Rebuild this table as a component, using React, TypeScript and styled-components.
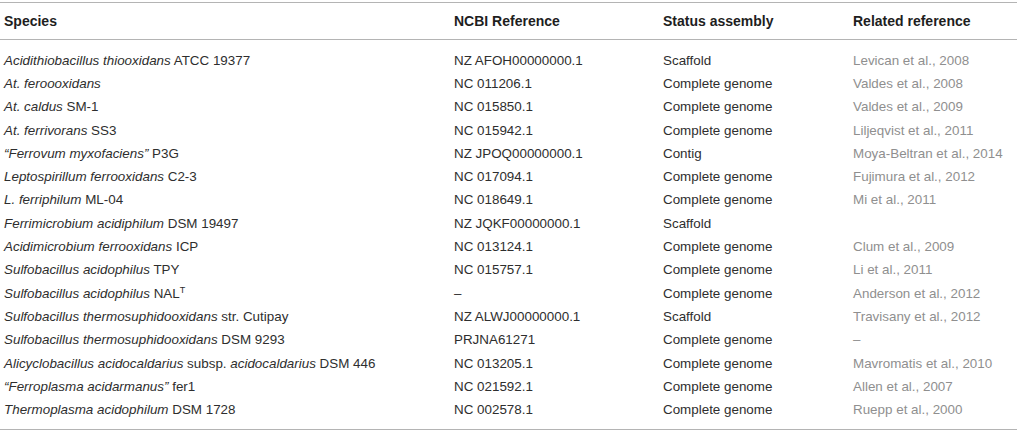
import React from "react";
import styled, { createGlobalStyle } from "styled-components";

const Global = createGlobalStyle`
  html, body { margin: 0; padding: 0; background: #ffffff; }
  body { font-family: "Liberation Sans", Arial, Helvetica, sans-serif; }
`;

const Wrapper = styled.div`
  width: 1017px;
  padding-top: 2px;
`;

const Table = styled.table`
  width: 1017px;
  border-collapse: collapse;
  table-layout: fixed;
  border-bottom: 1px solid #b4b4b4;
`;

const Col = styled.col<{ $w: number }>`
  width: ${(p) => p.$w}px;
`;

const HeadRow = styled.tr`
  border-top: 1px solid #b4b4b4;
  border-bottom: 1px solid #b4b4b4;
`;

const Th = styled.th`
  height: 36px;
  padding: 0 0 0 4px;
  text-align: left;
  vertical-align: middle;
  font-size: 14px;
  font-weight: bold;
  color: #1e1e1e;
`;

const Row = styled.tr`
  height: 23.3px;
`;

const Td = styled.td<{ $muted?: boolean }>`
  padding: 0 0 0 4px;
  height: 23.3px;
  vertical-align: middle;
  font-size: 13.4px;
  color: ${(p) => (p.$muted ? "#8f8f8f" : "#2e2e2e")};
  white-space: nowrap;
`;

const Spacer = styled.tr<{ $h: number }>`
  height: ${(p) => p.$h}px;
`;

const Sup = styled.sup`
  font-size: 9px;
  line-height: 0;
  vertical-align: 5px;
`;

type RowData = {
  species: React.ReactNode;
  ncbi: string;
  status: string;
  ref: string;
};

const rows: RowData[] = [
  { species: <><i>Acidithiobacillus thiooxidans</i> ATCC 19377</>, ncbi: "NZ AFOH00000000.1", status: "Scaffold", ref: "Levican et al., 2008" },
  { species: <i>At. feroooxidans</i>, ncbi: "NC 011206.1", status: "Complete genome", ref: "Valdes et al., 2008" },
  { species: <><i>At. caldus</i> SM-1</>, ncbi: "NC 015850.1", status: "Complete genome", ref: "Valdes et al., 2009" },
  { species: <><i>At. ferrivorans</i> SS3</>, ncbi: "NC 015942.1", status: "Complete genome", ref: "Liljeqvist et al., 2011" },
  { species: <><i>“Ferrovum myxofaciens”</i> P3G</>, ncbi: "NZ JPOQ00000000.1", status: "Contig", ref: "Moya-Beltran et al., 2014" },
  { species: <><i>Leptospirillum ferrooxidans</i> C2-3</>, ncbi: "NC 017094.1", status: "Complete genome", ref: "Fujimura et al., 2012" },
  { species: <><i>L. ferriphilum</i> ML-04</>, ncbi: "NC 018649.1", status: "Complete genome", ref: "Mi et al., 2011" },
  { species: <><i>Ferrimicrobium acidiphilum</i> DSM 19497</>, ncbi: "NZ JQKF00000000.1", status: "Scaffold", ref: "" },
  { species: <><i>Acidimicrobium ferrooxidans</i> ICP</>, ncbi: "NC 013124.1", status: "Complete genome", ref: "Clum et al., 2009" },
  { species: <><i>Sulfobacillus acidophilus</i> TPY</>, ncbi: "NC 015757.1", status: "Complete genome", ref: "Li et al., 2011" },
  { species: <><i>Sulfobacillus acidophilus</i> NAL<Sup>T</Sup></>, ncbi: "–", status: "Complete genome", ref: "Anderson et al., 2012" },
  { species: <><i>Sulfobacillus thermosuphidooxidans</i> str. Cutipay</>, ncbi: "NZ ALWJ00000000.1", status: "Scaffold", ref: "Travisany et al., 2012" },
  { species: <><i>Sulfobacillus thermosuphidooxidans</i> DSM 9293</>, ncbi: "PRJNA61271", status: "Complete genome", ref: "–" },
  { species: <><i>Alicyclobacillus acidocaldarius</i> subsp. <i>acidocaldarius</i> DSM 446</>, ncbi: "NC 013205.1", status: "Complete genome", ref: "Mavromatis et al., 2010" },
  { species: <><i>“Ferroplasma acidarmanus”</i> fer1</>, ncbi: "NC 021592.1", status: "Complete genome", ref: "Allen et al., 2007" },
  { species: <><i>Thermoplasma acidophilum</i> DSM 1728</>, ncbi: "NC 002578.1", status: "Complete genome", ref: "Ruepp et al., 2000" },
];

export default function App() {
  return (
    <>
      <Global />
      <Wrapper>
        <Table>
          <colgroup>
            <Col $w={450} />
            <Col $w={209} />
            <Col $w={190} />
            <Col $w={168} />
          </colgroup>
          <thead>
            <HeadRow>
              <Th>Species</Th>
              <Th>NCBI Reference</Th>
              <Th>Status assembly</Th>
              <Th>Related reference</Th>
            </HeadRow>
          </thead>
          <tbody>
            <Spacer $h={9} />
            {rows.map((r, i) => (
              <Row key={i}>
                <Td>{r.species}</Td>
                <Td>{r.ncbi}</Td>
                <Td>{r.status}</Td>
                <Td $muted>{r.ref}</Td>
              </Row>
            ))}
            <Spacer $h={8} />
          </tbody>
        </Table>
      </Wrapper>
    </>
  );
}
